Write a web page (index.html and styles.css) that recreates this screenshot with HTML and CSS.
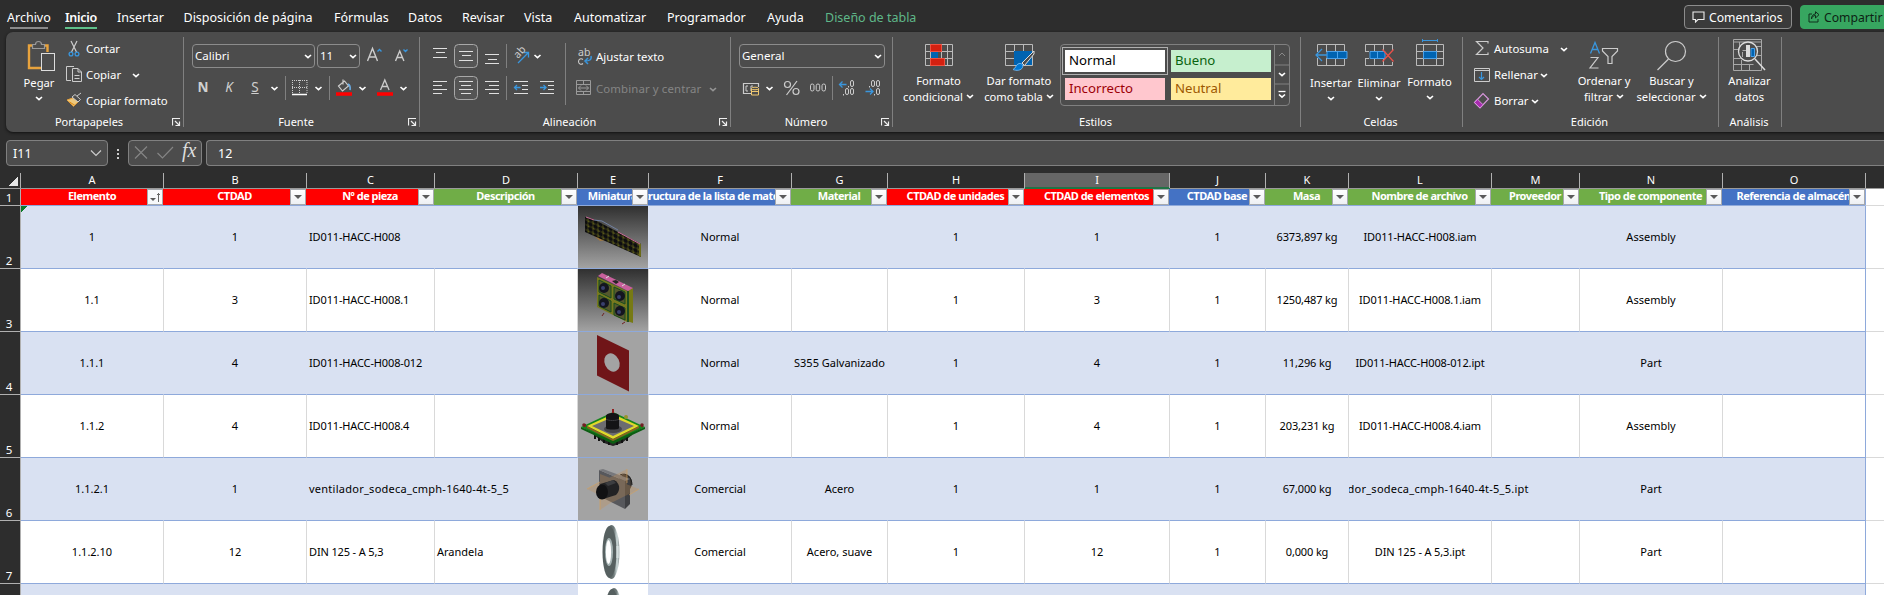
FILE: index.html
```html
<!DOCTYPE html>
<html lang="es">
<head>
<meta charset="utf-8">
<title>Excel</title>
<link rel="stylesheet" href="styles.css">
</head>
<body>
<svg class="defs" aria-hidden="true"><defs>
  <path id="chev" d="M-3-1.500L0 1.200 3-1.500" fill="none" stroke="#fff" stroke-width="1.600"/>
  <path id="launch" d="M.5 7.500V.5H8M3 3l4.500 4.500M7.500 3.500v4h-4" fill="none" stroke="#eee" stroke-width="1.200"/>
  <linearGradient id="sky" x1="0" y1="0" x2="0" y2="1"><stop offset="0" stop-color="#303030"/><stop offset="1" stop-color="#a2a2a2"/></linearGradient>
  <linearGradient id="steel"><stop offset="0" stop-color="#4d5656"/><stop offset=".65" stop-color="#6d7878"/><stop offset=".85" stop-color="#cfdcdc"/><stop offset="1" stop-color="#879292"/></linearGradient>
  <pattern id="fans" width="5" height="5" patternUnits="userSpaceOnUse" patternTransform="skewY(25)"><rect width="5" height="5" fill="#3f3f16"/><circle cx="2.500" cy="2.500" r="2.200" fill="#0d0d10"/><path d="M0 0h1.500" stroke="#7c7a1c"/></pattern>
</defs></svg>

<nav class="tabs">
  <span class="tab t1 file">Archivo</span><span class="tab t2 active">Inicio</span><span class="tab t3">Insertar</span><span class="tab t4">Disposición de página</span><span class="tab t5">Fórmulas</span><span class="tab t6">Datos</span><span class="tab t7">Revisar</span><span class="tab t8">Vista</span><span class="tab t9">Automatizar</span><span class="tab t10">Programador</span><span class="tab t11">Ayuda</span><span class="tab t12 ctx">Diseño de tabla</span>
  <span class="top-btn"><svg width="13" height="12" viewBox="0 0 13 12"><path d="M1 1h11v7.500H6L3.500 11V8.500H1z" fill="none" stroke="#eee" stroke-width="1.100"/></svg>Comentarios</span>
  <span class="top-btn share"><svg width="12" height="12" viewBox="0 0 12 12"><path d="M4 3H1v8h9V8M3.500 8C4 5.500 5.500 4.500 7.500 4.500V7L11 3.700 7.500.7V3C5 3 3.500 5 3.500 8z" fill="none" stroke="#10301c"/></svg>Compartir</span>
</nav>

<section class="ribbon">
  <div class="group g-clip">
    <div class="body">
      <div class="big paste">
        <svg width="60" height="38" viewBox="6 37 60 38"><path d="M33 45.500h-4V68h12" fill="none" stroke="#e8a33d" stroke-width="2.400"/><path d="M43 45.500h4.500V52" fill="none" stroke="#e8a33d" stroke-width="2.400"/><path d="M32.500 48.500v-4h3c0-4 6-4 6 0h3v4z" fill="#4c4c4c" stroke="#999" stroke-width="1.200"/><rect x="41.500" y="53.500" width="13" height="17" fill="#4c4c4c" stroke="#ddd"/></svg>
        <span>Pegar</span><svg class="dd" width="8" height="5" viewBox="-4 -2.500 8 5"><use href="#chev"/></svg>
      </div>
      <div class="list">
        <div><svg width="20" height="20" viewBox="66 39 20 20"><path d="M71 41l5.500 11M77 41l-5.500 11" stroke="#ccc" fill="none" stroke-width="1.200"/><circle cx="71" cy="54" r="1.900" fill="none" stroke="#3a96dd" stroke-width="1.300"/><circle cx="77" cy="54" r="1.900" fill="none" stroke="#3a96dd" stroke-width="1.300"/></svg><span>Cortar</span></div>
        <div><svg width="20" height="20" viewBox="66 65 20 20"><path d="M71 80.500h-4.500v-14h7.500M78 69.500" fill="none" stroke="#ccc"/><path d="M72.500 68.500h5.500l3.500 3.500v9.500h-9zM78 68.500V72h3.500M74.500 75.500h5M74.500 78.500h5" fill="none" stroke="#ccc"/></svg><span class="copy">Copiar</span><svg width="8" height="5" viewBox="-4 -2.500 8 5"><use href="#chev"/></svg></div>
        <div><svg width="20" height="20" viewBox="66 91 20 20"><path d="M67 100l7-2.500 4.500 4-5 4.800z" fill="#edc87d" stroke="#e8a33d"/><path d="M69.500 102l5 3" stroke="#e08a10"/><path d="M72 97l3-2.500 5.500 5-2.500 2.500zM77 96l4-3" fill="#4c4c4c" stroke="#ccc"/></svg><span>Copiar formato</span></div>
      </div>
    </div>
    <div class="label"><span>Portapapeles</span><svg width="9" height="9" viewBox="0 0 9 9"><use href="#launch"/></svg></div>
  </div>

  <div class="group g-font">
    <div class="body col">
      <div class="line first">
        <div class="select sel-font"><span>Calibri</span><svg width="8" height="5" viewBox="-4 -2.500 8 5"><use href="#chev"/></svg></div>
        <div class="select sel-size"><span>11</span><svg width="8" height="5" viewBox="-4 -2.500 8 5"><use href="#chev"/></svg></div>
        <svg width="59" height="24" viewBox="360 44 59 24"><path d="M367.500 61l5-12.500 5 12.500M369.500 57h6.200M395.500 61l4.200-10 4.200 10M397 57.500h5.300" fill="none" stroke="#ccc" stroke-width="1.400"/><path d="M377.500 51.500l2-2 2 2M403.500 49.500l2 2 2-2" fill="none" stroke="#3a96dd" stroke-width="1.400"/></svg>
      </div>
      <div class="line second">
        <b class="fmt n">N</b><i class="fmt k">K</i><u class="fmt s">S</u>
        <svg width="153" height="24" viewBox="266 76 153 24"><use href="#chev" x="274.500" y="88.500"/><path d="M285.500 76v24M329.500 76v24" stroke="#808080"/><path d="M292.500 80v13M307 80v13M292 80.500h15M292 87.500h15M299.500 80v13" stroke="#ccc" stroke-dasharray="1 1" fill="none"/><path d="M292 94.500h15" stroke="#fff" stroke-width="1.500"/><use href="#chev" x="318.500" y="88.500"/><path d="M338.500 86l6-5 4 5-6 5zM343 79.500v5" fill="none" stroke="#ccc" stroke-width="1.200"/><path d="M348 84c2 1 2.500 3 2 6" fill="none" stroke="#6aaee8" stroke-width="1.600"/><path d="M336 94h16M377 94h16" stroke="#f00" stroke-width="3.500"/><use href="#chev" x="362.500" y="88.500"/><path d="M380.500 90l4.300-10 4.300 10M382 86.500h5.500" fill="none" stroke="#ccc" stroke-width="1.300"/><use href="#chev" x="403.500" y="88.500"/></svg>
      </div>
    </div>
    <div class="label"><span>Fuente</span><svg width="9" height="9" viewBox="0 0 9 9"><use href="#launch"/></svg></div>
  </div>

  <div class="group g-align">
    <div class="body">
      <svg width="146" height="78" viewBox="420 37 146 78"><g fill="none" stroke="#e0e0e0"><rect x="454.500" y="44.500" width="23" height="23" rx="4" fill="#555" stroke="#a8a8a8"/><rect x="454.500" y="76.500" width="23" height="23" rx="4" fill="#555" stroke="#a8a8a8"/>
      <path d="M433 48.500h14M436 52.500h9M433 57.500h14M459 51.500h14M462 55.500h9M459 60.500h14M485 54.500h14M488 59.500h9M485 63.500h14M433 81.500h14M433 85.500h9M433 89.500h14M433 93.500h9M459 81.500h14M461 85.500h10M459 89.500h14M461 93.500h10M485 81.500h14M489 85.500h10M485 89.500h14M489 93.500h10M514 81.500h14M522 85.500h6M522 89.500h6M514 93.500h14M540 81.500h14M548 85.500h6M548 89.500h6M540 93.500h14"/><path d="M506.500 44v24M506.500 76v24M565.500 43v62" stroke="#808080"/><path d="M514.500 87.500h6M517 85l-2.500 2.500 2.500 2.500M540 87.500h6M543.500 85l2.500 2.500-2.500 2.500" stroke="#3a96dd" stroke-width="1.300"/><path d="M518 63l10.500-10.500M523.500 52.500h5v5" stroke="#3a96dd" stroke-width="1.300"/></g><text x="0" y="0" transform="translate(518 59)rotate(-48)" class="glyph">ab</text><use href="#chev" x="537.500" y="56.500"/></svg>
      <div class="list wide">
        <div><svg width="20" height="20" viewBox="576 47 20 20"><text x="578" y="56" class="glyph">ab</text><path d="M583 59.500c-2-1.500-4.500-.5-4.500 2s2.500 3.500 4.500 2" fill="none" stroke="#ccc" stroke-width="1.100"/><path d="M591 56c1 4-2 5-6 5M588 58l-3 3 3 3" fill="none" stroke="#3a96dd" stroke-width="1.500"/></svg><span class="wrap">Ajustar texto</span></div>
        <div class="off"><svg width="20" height="20" viewBox="576 79 20 20"><path d="M576.500 80.500h14v14h-14zM576.500 84.500h14M576.500 91.500h14M583.500 80v4M583.500 92v3M578.500 88h10M581 85.500L578.500 88l2.500 2.500M586 85.500l2.500 2.500-2.500 2.500" fill="none" stroke="#9a9a9a"/></svg><span class="merge">Combinar y centrar</span><svg class="dim" width="8" height="5" viewBox="-4 -2.500 8 5"><use href="#chev"/></svg></div>
      </div>
    </div>
    <div class="label"><span>Alineación</span><svg width="9" height="9" viewBox="0 0 9 9"><use href="#launch"/></svg></div>
  </div>

  <div class="group g-num">
    <div class="body col">
      <div class="line first"><div class="select sel-num"><span>General</span><svg width="8" height="5" viewBox="-4 -2.500 8 5"><use href="#chev"/></svg></div></div>
      <svg width="161" height="40" viewBox="731 68 161 40"><path d="M751 93.500h-7.500v-10h15V87" fill="none" stroke="#ccc" stroke-width="1.200"/><path d="M748 86h-2v5h2M753 86h-2v5" fill="none" stroke="#ccc"/><path d="M751.500 88.500h7v6.500h-7z" fill="#4c4c4c" stroke="#f0c870"/><path d="M751.500 91.500h7" stroke="#f0c870"/><ellipse cx="755" cy="88.500" rx="3.500" ry="1.300" fill="#4c4c4c" stroke="#f0c870"/><use href="#chev" x="769.500" y="88.500"/><circle cx="787.500" cy="84.500" r="3" fill="none" stroke="#ccc" stroke-width="1.200"/><circle cx="796" cy="91.500" r="3" fill="none" stroke="#ccc" stroke-width="1.200"/><path d="M797 81l-10.500 14" stroke="#ccc" stroke-width="1.200"/><g fill="none" stroke="#ccc"><rect x="810.500" y="84" width="3.500" height="7" rx="1.700"/><rect x="816.200" y="84" width="3.500" height="7" rx="1.700"/><rect x="822" y="84" width="3.500" height="7" rx="1.700"/><rect x="850.500" y="80.500" width="3" height="6" rx="1.500"/><rect x="845.500" y="88.500" width="3" height="6" rx="1.500"/><rect x="850.500" y="88.500" width="3" height="6" rx="1.500"/><rect x="871.500" y="80.500" width="3" height="6" rx="1.500"/><rect x="876.500" y="80.500" width="3" height="6" rx="1.500"/><rect x="876.500" y="88.500" width="3" height="6" rx="1.500"/><path d="M848.500 86v1.500M843.500 94v1.500M869.500 86v1.500M874.500 94v1.500"/><path d="M839.500 84.500h7M842.500 81.500l-3 3 3 3M865.500 91.500h7M870 88.500l3 3-3 3" stroke="#3a96dd" stroke-width="1.300"/></g><path d="M832.500 76v24" stroke="#808080"/></svg>
    </div>
    <div class="label"><span>Número</span><svg width="9" height="9" viewBox="0 0 9 9"><use href="#launch"/></svg></div>
  </div>

  <div class="group g-style">
    <div class="body">
      <div class="big two cond"><svg width="93" height="36" viewBox="893 37 93 36"><path d="M926.500 44.500h27v21h-27zM926.500 51.500h27M926.500 58.500h27M948.500 44v22M942.500 44v22M931.500 44v22" fill="none" stroke="#bbb"/><path d="M931.500 44.500h11v7h-11zM931.500 58.500h14v7h-14z" fill="#d42010" stroke="#f05040"/><path d="M932 52h7v6h-7z" fill="#0063b1"/></svg><span>Formato</span><span>condicional<svg class="dd" width="8" height="5" viewBox="-4 -2.500 8 5"><use href="#chev"/></svg></span></div>
      <div class="big two tabl"><svg width="74" height="36" viewBox="982 37 74 36"><path d="M1005.500 44.500h27v21h-27zM1005.500 51.500h27M1005.500 58.500h27M1014.500 44v22M1023.500 44v22" fill="none" stroke="#bbb"/><path d="M1014 51h18v14h-18z" fill="#0063b1"/><path d="M1034 51l-12 12 2.500 2.500L1034 54z" fill="#4c4c4c" stroke="#ddd"/><path d="M1013 69.500c3-1 2.500-5 6-6 3-.5 4.500 2 3.500 4-1.500 3-6 3.500-9.500 2z" fill="#0078d4" stroke="#6ab4f0"/></svg><span>Dar formato</span><span>como tabla<svg class="dd" width="8" height="5" viewBox="-4 -2.500 8 5"><use href="#chev"/></svg></span></div>
      <div class="gallery">
        <div class="swatches"><span class="normal">Normal</span><span class="good">Bueno</span><span class="bad">Incorrecto</span><span class="neutral">Neutral</span></div>
        <svg class="scroll" width="14" height="60" viewBox="0 0 14 60"><path d="M0 20h14M0 39h14" stroke="#808080"/><use href="#chev" x="7" y="29.500"/><use href="#chev" x="7" y="51"/><path d="M3.500 46.500h7" stroke="#fff" stroke-width="1.300"/><path d="M4 11l3-3 3 3" fill="none" stroke="#888"/></svg>
      </div>
    </div>
    <div class="label"><span>Estilos</span></div>
  </div>

  <div class="group g-cell">
    <div class="body">
      <div class="big ins"><svg width="48" height="38" viewBox="1307 37 48 38"><path d="M1317.500 52v-7.500h27V52M1317.500 58v7.500h27V58M1326.500 44v8M1335.500 44v8M1326.500 58v8M1335.500 58v8" fill="none" stroke="#bbb"/><path d="M1327 51.500h20v7h-20zM1337.500 51.500v7" fill="#0063b1" stroke="#4aa0e8"/><path d="M1327 55h-11M1322 49l-6 6 6 6" fill="none" stroke="#3a96dd" stroke-width="1.300"/></svg><span>Insertar</span><svg class="dd" width="8" height="5" viewBox="-4 -2.500 8 5"><use href="#chev"/></svg></div>
      <div class="big del"><svg width="48" height="38" viewBox="1355 37 48 38"><path d="M1365.500 51v-6.500h27V51M1365.500 59v6.500h27V62M1374.500 44v7M1383.500 44v7M1374.500 59v7M1383.500 59v7M1365 51.500h4M1365 58.500h4" fill="none" stroke="#bbb"/><path d="M1370 51.500h15v7h-15zM1377.500 51v8" fill="#0063b1" stroke="#4aa0e8"/><path d="M1382.500 49.500l11 12M1393.500 49.500l-11 12" stroke="#e8504a" stroke-width="1.300"/></svg><span>Eliminar</span><svg class="dd" width="8" height="5" viewBox="-4 -2.500 8 5"><use href="#chev"/></svg></div>
      <div class="big fmtc"><svg width="53" height="37" viewBox="1403 37 53 37"><path d="M1416.500 44.500h27v21h-27zM1416.500 51.500h27M1416.500 58.500h27M1423.500 44v22M1436.500 44v22" fill="none" stroke="#bbb"/><path d="M1423.500 51.500h13v7h-13z" fill="#0063b1" stroke="#4aa0e8"/><path d="M1422 40.500h16M1422.500 39v3M1437.500 39v3" stroke="#3a96dd"/></svg><span>Formato</span><svg class="dd" width="8" height="5" viewBox="-4 -2.500 8 5"><use href="#chev"/></svg></div>
    </div>
    <div class="label"><span>Celdas</span></div>
  </div>

  <div class="group g-edit">
    <div class="body">
      <div class="list edit">
        <div><svg width="31" height="20" viewBox="1464 39 31 20"><path d="M1489 43.500v-2h-11.500l6.500 6.500-6.500 6.500h11.500v-2" fill="none" stroke="#ccc" stroke-width="1.200"/></svg><span class="autosum">Autosuma</span><svg width="8" height="5" viewBox="-4 -2.500 8 5"><use href="#chev"/></svg></div>
        <div><svg width="31" height="20" viewBox="1464 64 31 20"><path d="M1475.500 67.500h15v13h-15zM1475.500 69.500h15" fill="none" stroke="#ccc"/><path d="M1482.500 71v7.500M1480 76l2.500 2.500 2.500-2.500" fill="none" stroke="#3a96dd" stroke-width="1.200"/></svg><span>Rellenar</span><svg class="near" width="8" height="5" viewBox="-4 -2.500 8 5"><use href="#chev"/></svg></div>
        <div><svg width="31" height="20" viewBox="1464 90 31 20"><path d="M1475.500 101.500l8.500-9 5.500 5.500-8.500 9z" fill="#4c4c4c" stroke="#d896dc" stroke-width="1.200"/><path d="M1475.500 101.500l3-3.300 5.500 5.500-3 3.300z" fill="#a82cb0" stroke="#d896dc"/></svg><span>Borrar</span><svg class="near" width="8" height="5" viewBox="-4 -2.500 8 5"><use href="#chev"/></svg></div>
      </div>
      <div class="big two sort"><svg width="52" height="36" viewBox="1579 37 52 36"><path d="M1591.500 53.500l4.500-11 4.500 11M1593 49.500h6" fill="none" stroke="#3a96dd" stroke-width="1.300"/><path d="M1591.500 57.500h7.500l-8 10.500h8.500" fill="none" stroke="#ccc" stroke-width="1.200"/><path d="M1603.500 48.500h15v2.500l-5.500 5.500v7h-4v-7l-5.500-5.500z" fill="none" stroke="#ccc" stroke-width="1.200"/></svg><span>Ordenar y</span><span>filtrar<svg class="dd" width="8" height="5" viewBox="-4 -2.500 8 5"><use href="#chev"/></svg></span></div>
      <div class="big two find"><svg width="69" height="36" viewBox="1638 37 69 36"><circle cx="1676.500" cy="51.500" r="10" fill="none" stroke="#ccc" stroke-width="1.200"/><path d="M1669.500 59l-11 11" stroke="#ccc" stroke-width="1.300"/></svg><span>Buscar y</span><span>seleccionar<svg class="dd" width="8" height="5" viewBox="-4 -2.500 8 5"><use href="#chev"/></svg></span></div>
    </div>
    <div class="label"><span>Edición</span></div>
  </div>

  <div class="group g-ana">
    <div class="body">
      <div class="big two"><svg width="61" height="36" viewBox="1720 37 61 36"><path d="M1734.500 39.500h28v31h-28zM1734 42h28M1734.500 49.500h6M1734.500 58.500h7M1734.500 64.500h20M1742.500 60v10M1750.500 64v6M1757 46.500h6M1758 55.500h5M1740.500 42v8" fill="none" stroke="#a8a8a8"/><circle cx="1749" cy="51.500" r="9.500" fill="#4c4c4c" stroke="#ddd" stroke-width="1.300"/><path d="M1743.500 52v5M1743.500 50.500h3.500" stroke="#aaa"/><path d="M1747 45h4v12h-4z" fill="#ddd"/><path d="M1752 48.500h3.500v8H1752z" fill="#0063b1" stroke="#4aa0e8"/><path d="M1756 59l10 11" stroke="#ddd" stroke-width="1.500"/></svg><span>Analizar</span><span>datos</span></div>
    </div>
    <div class="label"><span>Análisis</span></div>
  </div>
</section>

<section class="formula">
  <div class="namebox"><span>I11</span><svg width="12" height="8" viewBox="0 0 12 8"><path d="M1 1.500l5 5 5-5" fill="none" stroke="#ccc" stroke-width="1.200"/></svg></div>
  <svg class="dots" width="20" height="26" viewBox="108 140 20 26"><path d="M117 149h2v2h-2zM117 153h2v2h-2zM117 157h2v2h-2z" fill="#ccc"/></svg>
  <div class="fx"><svg width="46" height="20" viewBox="132 144 46 20"><path d="M135 147.500l12 12M147 147.500l-12 12M157.500 154l5 5L173 148" fill="none" stroke="#858585" stroke-width="1.200"/></svg><i>fx</i></div>
  <div class="input">12</div>
</section>

<main class="sheet">
  <div class="row letters"><span class="corner"></span><span>A</span><span>B</span><span>C</span><span>D</span><span>E</span><span>F</span><span>G</span><span>H</span><span class="sel">I</span><span>J</span><span>K</span><span>L</span><span>M</span><span>N</span><span>O</span><span></span></div>
  <div class="row head"><span class="num">1</span>
    <span class="red"><em>Elemento</em><b class="sorted"></b></span><span class="red"><em>CTDAD</em><b></b></span><span class="red"><em>Nº de pieza</em><b></b></span><span class="green"><em>Descripción</em><b></b></span><span class="blue"><em>Miniatura</em><b></b></span><span class="blue"><em>Estructura de la lista de materiales</em><b></b></span><span class="green"><em>Material</em><b></b></span><span class="red"><em>CTDAD de unidades</em><b></b></span><span class="red"><em>CTDAD de elementos</em><b></b></span><span class="blue"><em>CTDAD base</em><b></b></span><span class="green"><em>Masa</em><b></b></span><span class="green"><em>Nombre de archivo</em><b></b></span><span class="green"><em>Proveedor</em><b></b></span><span class="green"><em>Tipo de componente</em><b></b></span><span class="blue"><em>Referencia de almacén</em><b></b></span><span class="rest"></span></div>
  <div class="row data band"><span class="num">2</span><span class="flag">1</span><span>1</span><span class="l">ID011-HACC-H008</span><span></span>
    <span class="pic"><svg width="70" height="62" viewBox="0 0 70 62"><rect width="70" height="62" fill="url(#sky)"/><path d="M14 28l8 7 7-1-10-8z" fill="#a07840"/><path d="M7 11l8 2 48 25v13L7 26z" fill="url(#fans)"/><path d="M61 37l2 1v13l-2-1z" fill="#6a6a18"/><path d="M8 11l8 3M40 26l22 12" stroke="#c86a98" fill="none"/><path d="M16 14l8 1 16 9" stroke="#7080a0" fill="none"/></svg></span>
    <span>Normal</span><span></span><span>1</span><span>1</span><span>1</span><span>6373,897 kg</span><span>ID011-HACC-H008.iam</span><span></span><span>Assembly</span><span></span><span class="rest"></span></div>
  <div class="row data"><span class="num">3</span><span>1.1</span><span>3</span><span class="l">ID011-HACC-H008.1</span><span></span>
    <span class="pic"><svg width="70" height="62" viewBox="0 0 70 62"><rect width="70" height="62" fill="url(#sky)"/><path d="M19 8l30 14v31L19 38z" fill="#77781f"/><path d="M49 22l6-3v35l-6-2z" fill="#777a14"/><path d="M50 22v31" stroke="#1e4f20" stroke-width="2"/><path d="M21 11l12 6v12l-12-6zM36 18l11 5v12l-11-5zM21 26l12 6v11l-12-6zM36 34l11 5v12l-11-5z" fill="#55582d" stroke="#174c1f"/><g fill="#14151f"><circle cx="26" cy="19" r="5"/><circle cx="42" cy="27" r="5"/><circle cx="26" cy="34" r="5"/><circle cx="42" cy="42" r="5"/></g><g fill="#39406e"><circle cx="25" cy="19" r="2"/><circle cx="41" cy="28" r="2"/><circle cx="25" cy="35" r="2"/><circle cx="41" cy="43" r="2"/></g><path d="M20 7l4-3 31 15-5 3z" fill="#c8609c"/><path d="M34 12l4-1 3 2-3 2z" fill="#252525"/><path d="M28 9l3-2M44 17l3-2" stroke="#ddd"/><path d="M26 44l-2 3M47 53l-3 2" stroke="#702020"/></svg></span>
    <span>Normal</span><span></span><span>1</span><span>3</span><span>1</span><span>1250,487 kg</span><span>ID011-HACC-H008.1.iam</span><span></span><span>Assembly</span><span></span><span class="rest"></span></div>
  <div class="row data band"><span class="num">4</span><span>1.1.1</span><span>4</span><span class="l">ID011-HACC-H008-012</span><span></span>
    <span class="pic"><svg width="70" height="62" viewBox="0 0 70 62"><rect width="70" height="62" fill="#a3a3a3"/><path d="M19 3l32 15.500v41L19 43.500z" fill="#701518"/><ellipse cx="34" cy="30.500" rx="7.300" ry="9.500" transform="rotate(-25 34 30.500)" fill="#a3a3a3"/></svg></span>
    <span>Normal</span><span>S355 Galvanizado</span><span>1</span><span>4</span><span>1</span><span>11,296 kg</span><span>ID011-HACC-H008-012.ipt</span><span></span><span>Part</span><span></span><span class="rest"></span></div>
  <div class="row data"><span class="num">5</span><span>1.1.2</span><span>4</span><span class="l">ID011-HACC-H008.4</span><span></span>
    <span class="pic"><svg width="70" height="62" viewBox="0 0 70 62"><rect width="70" height="62" fill="#a3a3a3"/><path d="M16 40l38 0-10 8-9 3-9-3z" fill="#252525"/><path d="M17 44v-4M21 46v-4M26 48v-4M31 50v-4M39 50v-4M44 48v-4M49 46v-4" stroke="#111" stroke-width="2"/><path d="M3 32l32-15 32 15-32 16z" fill="#16851b"/><path d="M3 32l32 14 32-14v2L35 49 3 34z" fill="#0c5e12"/><path d="M9 31l26-12 26 12-26 13z" fill="#e0d82c"/><path d="M14 31l21-9 21 9-21 10z" fill="#6c6c70"/><path d="M9 31l26 13 26-13v2L35 46 9 33z" fill="#8a6020"/><ellipse cx="35" cy="34" rx="9" ry="4" fill="#444448"/><path d="M28 21c0-4 13-4 13 0v12c0 2-13 2-13 0z" fill="#141416"/><path d="M28 24c2 2 11 2 13 0" stroke="#3c3c40" fill="none"/><path d="M35 14v4M7 29v3M64 29v3" stroke="#902020" stroke-width="2"/><circle cx="6" cy="30" r="1.800" fill="#702024"/><circle cx="64" cy="30" r="1.800" fill="#702024"/><circle cx="48" cy="22" r="2" fill="#98942a"/></svg></span>
    <span>Normal</span><span></span><span>1</span><span>4</span><span>1</span><span>203,231 kg</span><span>ID011-HACC-H008.4.iam</span><span></span><span>Assembly</span><span></span><span class="rest"></span></div>
  <div class="row data band"><span class="num">6</span><span>1.1.2.1</span><span>1</span><span class="l loose">ventilador_sodeca_cmph-1640-4t-5_5</span><span></span>
    <span class="pic"><svg width="70" height="62" viewBox="0 0 70 62"><rect width="70" height="62" fill="#a3a3a3"/><ellipse cx="47" cy="25" rx="7" ry="9" fill="#3a3633"/><path d="M42 17c6-3 12 2 12 10" fill="none" stroke="#1d1d1d"/><path d="M21 12l26 11v28L21 38z" fill="#57585c"/><path d="M47 23l5-3v26l-5 5z" fill="#3e3f42"/><path d="M21 12l4-1 27 10-5 2z" fill="#77787c"/><path d="M9 31L49 11v23L22 52V16L61 31 35 44z" fill="#c89050" opacity=".3"/><path d="M22 52V29M49 11v14M9 31l13-7M61 31l-10 6" stroke="#d0a060" fill="none" opacity=".7"/><path d="M22 26l14-4c6 3 7 10 2 15l-13 4z" fill="#222224"/><ellipse cx="24" cy="34" rx="6" ry="7.500" fill="#111113"/><path d="M27 25l8-3 3 3-8 3z" fill="#3c3d40"/></svg></span>
    <span>Comercial</span><span>Acero</span><span>1</span><span>1</span><span>1</span><span>67,000 kg</span><span class="spill loose">ventilador_sodeca_cmph-1640-4t-5_5.ipt</span><span></span><span>Part</span><span></span><span class="rest"></span></div>
  <div class="row data"><span class="num">7</span><span>1.1.2.10</span><span>12</span><span class="l">DIN 125 - A 5,3</span><span class="l">Arandela</span>
    <span class="pic"><svg width="70" height="62" viewBox="0 0 70 62"><rect width="70" height="62" fill="#fff"/><ellipse cx="33.500" cy="31" rx="8" ry="27" fill="url(#steel)"/><ellipse cx="31.500" cy="31" rx="7" ry="26" fill="#566060"/><ellipse cx="31" cy="31" rx="4" ry="14" fill="#a5b3b3"/><ellipse cx="30.500" cy="31" rx="2.600" ry="12" fill="#fff"/><path d="M38 31h4" stroke="#e5eeee" stroke-width="12" opacity=".5"/></svg></span>
    <span>Comercial</span><span>Acero, suave</span><span>1</span><span>12</span><span>1</span><span>0,000 kg</span><span>DIN 125 - A 5,3.ipt</span><span></span><span>Part</span><span></span><span class="rest"></span></div>
  <div class="row data band last"><span class="num"></span><span></span><span></span><span></span><span></span>
    <span class="pic"><svg width="70" height="11" viewBox="0 0 70 11"><rect width="70" height="62" fill="#fff"/><ellipse cx="36" cy="31" rx="8" ry="27" fill="url(#steel)"/><ellipse cx="34" cy="31" rx="7" ry="26" fill="#566060"/></svg></span>
    <span></span><span></span><span></span><span></span><span></span><span></span><span></span><span></span><span></span><span></span><span class="rest"></span></div>
</main>
</body>
</html>
```
FILE: styles.css
```css
* { box-sizing: border-box; }
body {
  margin: 0;
  width: 1884px;
  height: 595px;
  overflow: hidden;
  background: #2d2d2d;
  color: #fff;
  font: 11px "Noto Sans", "Open Sans", sans-serif;
  white-space: nowrap;
}
svg { display: block; flex: none; }
.defs { width: 0; height: 0; position: absolute; }

/* Tabs */
.tabs { display: flex; height: 32px; padding-left: 7px; font-size: 12.500px; }
.tab { height: 29px; line-height: 35px; flex: none; }
.t1 { width: 58px; } .t2 { width: 52px; } .t3 { width: 66.500px; } .t4 { width: 150.500px; }
.t5 { width: 74px; } .t6 { width: 54px; } .t7 { width: 62px; } .t8 { width: 50px; }
.t9 { width: 93px; } .t10 { width: 100px; } .t11 { width: 58px; } .t12 { width: 859px; }
.active { font-weight: 600; letter-spacing: -.3px; background: linear-gradient(#5fc08a, #5fc08a) 0 27px / 32px 2px no-repeat; }
.file { background: linear-gradient(#8a8a8a, #8a8a8a) 3px 27px / 38px 2px no-repeat; }
.ctx { color: #5fb889; }
.top-btn {
  display: flex; flex: none; align-items: center; gap: 4px;
  width: 108px; height: 24px; margin: 5px 8px 0 0; padding-left: 7px;
  border: 1px solid #8c8c8c; border-radius: 4px; background: #3b3b3b; font-size: 12.200px;
}
.share { background: #37a660; border-color: #37a660; color: #0d1f14; }

/* Ribbon */
.ribbon {
  display: flex; height: 100px; margin-left: 6px; padding-top: 5px;
  background: #4c4c4c; border-radius: 7px 0 0 7px; box-shadow: 0 1px 3px #111;
}
.group { flex: none; height: 90px; border-right: 1px solid #808080; }
.g-clip { width: 178px; } .g-font { width: 236px; } .g-align { width: 311px; } .g-num { width: 162px; }
.g-style { width: 408px; } .g-cell { width: 162px; } .g-edit { width: 256px; } .g-ana { width: 63px; }
.body { display: flex; height: 78px; }
.body.col { flex-direction: column; }
.label { display: flex; height: 14px; line-height: 14px; padding-right: 2px; }
.label span { flex: 1; text-align: center; }
.label svg { margin-top: 3px; }
.big { display: flex; flex-direction: column; align-items: center; flex: none; line-height: 16px; font-size: 11.200px; }
.big > .dd { margin-top: 5px; }
.two span .dd { display: inline-block; margin: 0 0 2px 3px; }
.paste { width: 60px; }
.paste span, .paste .dd { margin-left: 6px; }
.list { margin-top: -1px; font-size: 11.400px; }
.list > div { display: flex; align-items: center; height: 26px; }
.list > div > span { margin-top: -1px; }
.copy { width: 46px; }
.line { display: flex; flex: none; align-items: center; padding-left: 8px; }
.first { margin-top: 7px; height: 24px; gap: 2px; }
.first > svg:last-child { margin-left: -2px; }
.second { margin-top: 8px; height: 24px; }
.select {
  display: flex; align-items: center; justify-content: space-between;
  height: 24px; padding: 0 2px; border: 1px solid #8c8c8c; border-radius: 4px; font-size: 11.500px;
}
.select span { margin-top: -1px; }
.sel-font { width: 123px; } .sel-size { width: 43px; } .sel-num { width: 146px; }
.fmt { color: #d0d0d0; font-size: 13.500px; text-align: center; flex: none; line-height: 22px; height: 24px; }
.n { width: 22px; } .k { width: 30px; } .s { width: 22px; }
.glyph { fill: #ccc; font-size: 10.500px; }
.wide { margin: 4px 0 0 10px; }
.wide > div { height: 32px; }
.merge { width: 113px; color: #858585; letter-spacing: .12px; }
.dim { opacity: .4; }
.cond { width: 89px; padding-left: 2px; }
.tabl { width: 74px; }
.gallery { display: flex; width: 230px; height: 62px; margin: 7px 0 0 4px; border: 1px solid #808080; border-radius: 4px; }
.swatches { display: grid; grid-template-columns: 100px 100px; gap: 6px; padding: 5px 0 0 4px; width: 214px; grid-auto-rows: 22px; border-right: 1px solid #808080; }
.swatches span { padding-left: 4px; font-size: 13.200px; line-height: 21px; }
.normal { background: #fff; color: #000; box-shadow: 0 0 0 2px #4c4c4c, 0 0 0 3px #b0b0b0; }
.good { background: #c6efce; color: #0a6410; }
.bad { background: #ffc7ce; color: #9c0006; }
.neutral { background: #ffeb9c; color: #9c5700; }
.ins { width: 54px; padding-left: 6px; } .del { width: 48px; } .fmtc { width: 53px; }
.edit { width: 115px; }
.autosum { width: 66px; }
.near { margin-left: 2px; }
.sort { width: 52px; } .find { width: 69px; margin-left: 7px; }
.g-ana .big { width: 61px; }

/* Formula bar */
.formula { display: flex; height: 41px; padding: 8px 0 7px 6px; font-size: 12.500px; }
.formula div { height: 26px; border: 1px solid #808080; border-radius: 4px; background: #4c4c4c; }
.namebox { display: flex; flex: none; width: 102px; align-items: center; justify-content: space-between; padding: 0 5px 0 6px; }
.fx { display: flex; flex: none; width: 74px; margin: 0 4px 0 0; align-items: center; padding-left: 3px; }
.fx i { margin: -5px 0 0 4px; font: italic 20px "Liberation Serif", serif; color: #ddd; }
.input { flex: 1; padding-left: 11px; line-height: 25px; border-right: 0 !important; border-radius: 4px 0 0 4px !important; }

/* Sheet */
.sheet { height: 422px; overflow: hidden; }
.row { display: grid; grid-template-columns: 21px 143px 143px 128px 143px 71px 143px 96px 137px 145px 96px 83px 143px 88px 143px 143px 1fr; }
.letters { height: 16px; border-bottom: 1px solid #9a9a9a; line-height: 14px; text-align: center; }
.letters span { border-right: 1px solid #b0b0b0; height: 15px; }
.letters span:last-child { border: 0; }
.letters .sel { background: #666; box-shadow: 0 1px #217346, inset 0 -1px #217346; }
.corner { background: linear-gradient(135deg, transparent 50%, #e6e6e6 50%) 9px 4px / 9px 9px no-repeat; }
.num { display: flex; align-items: flex-end; justify-content: center; padding-right: 2px; background: #2d2d2d; color: #fff; border-right: 1px solid #b0b0b0; border-bottom: 1px solid #b0b0b0; font-size: 11.500px; line-height: 15px; }
.head { grid-template-columns: 21px 142px 143px 128px 143px 71px 143px 96px 137px 145px 96px 83px 143px 88px 143px 143px 1fr; height: 17px; background: #fff; font-weight: 700; }
.head .num { font-weight: 400; }
.head > span:not(.num) { display: grid; grid-template-columns: minmax(0, 1fr) 0; min-width: 0; overflow: hidden; justify-content: center; border-bottom: 1px solid #8ea9db; }
.head em { justify-self: center; font-style: normal; letter-spacing: -.5px; line-height: 14px; }
.head b { width: 16px; margin-left: -16px; border: 1px solid #a6a9ae; background: linear-gradient(#fff, #eef0f3); display: flex; align-items: center; justify-content: center; position: relative; }
.head b::after { content: ""; border: 4px solid transparent; border-top-color: #5a5a5a; border-bottom: 0; }
.head .sorted::after { margin: 4px 5px 0 0; border-width: 3px 3px 0; }
.head .sorted { background: linear-gradient(#666, #666) 10px 3px / 1px 9px no-repeat, linear-gradient(#666, #666) 9px 4px / 3px 1px no-repeat, #f7f8fa; }
.red { background: #f00; } .green { background: #70ad47; } .blue { background: #4472c4; }
.data { height: 63px; color: #000; background: #fff; }
.data > span:not(.num) { display: flex; min-width: 0; align-items: center; justify-content: center; padding-bottom: 2px; border-right: 1px solid #d9d9d9; border-bottom: 1px solid #8ea9db; line-height: 15px; }
.data > .pic:not(.num) { padding: 0; }
.data > span:nth-child(4), .data > span:nth-child(12), .data > span:nth-child(13) { letter-spacing: -.14px; }
.data > .l:not(.num) { justify-content: flex-start; padding-left: 2px; z-index: 1; }
.data > span.loose:not(.num) { letter-spacing: .26px; }
.band { background: linear-gradient(#d9e1f2, #d9e1f2) 21px 0 / 1844px 63px no-repeat #fff; }
.band > span:not(.num) { border-right-color: transparent; background-clip: padding-box; }
.data > span:nth-child(16) { border-right-color: #8ea9db !important; }
.row > .rest:not(.num) { border-right: 0; border-bottom-color: #d9d9d9; background: #fff; }
.head > .rest:not(.num) { border-left: 1px solid #8ea9db; }
.flag { background: linear-gradient(135deg, #0a7a28 50%, transparent 50%) 0 0 / 6px 6px no-repeat !important; }
.data > .spill:not(.num) { clip-path: inset(0 -60px 0 0); }
.last { height: 11px; }
.last > span:not(.num) { border-bottom: 0; }
.last > .num { border-bottom: 0; }
```
